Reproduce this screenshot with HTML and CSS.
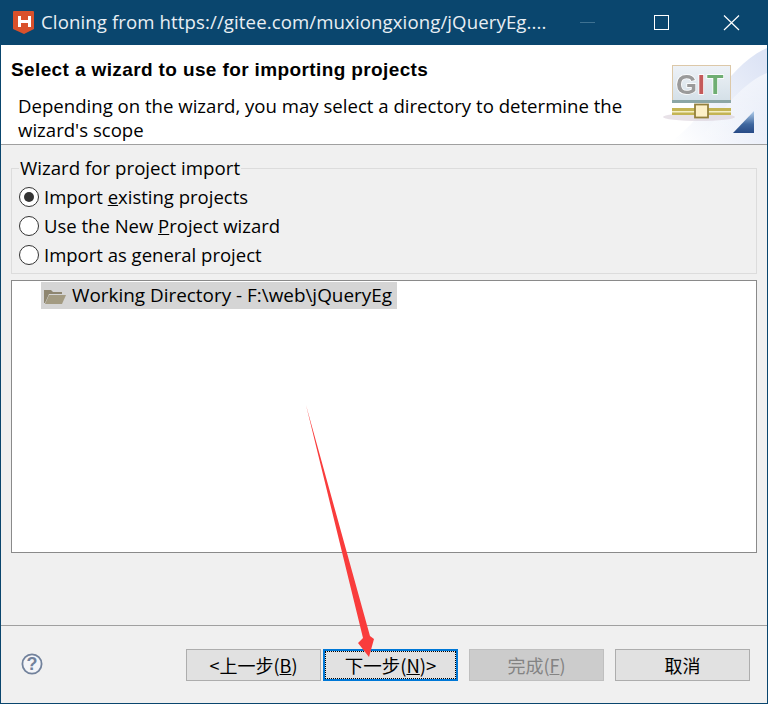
FILE: index.html
```html
<!DOCTYPE html>
<html lang="en">
<head>
<meta charset="utf-8">
<title>Cloning</title>
<link rel="stylesheet" href="styles.css">
</head>
<body>
<div class="window">
  <header class="titlebar">
    <svg class="app-icon" width="21" height="23" viewBox="0 0 21 23">
      <path d="M1 0H20Q21 0 21 1V18L11 23L0 18V1Q0 0 1 0Z" fill="#d9512c"/>
      <path d="M5 5H8V9H15V5H18V16H15V12H8V16H5Z" fill="#fff"/>
    </svg>
    <div class="title">Cloning from https://gitee.com/muxiongxiong/jQueryEg....</div>
    <div class="win-controls">
      <svg width="46" height="45" viewBox="0 0 46 45"><path d="M11 22.5H26" stroke="#3f7292" stroke-width="1"/></svg>
      <svg width="46" height="45" viewBox="0 0 46 45"><rect x="15.5" y="15.5" width="14" height="14" fill="none" stroke="#fff"/></svg>
      <svg width="46" height="45" viewBox="0 0 46 45"><path d="M15 15.5L30 30M30 15.5L15 30" stroke="#fff" stroke-width="1.2"/></svg>
    </div>
  </header>
  <section class="banner">
    <div class="banner-text">
      <h1>Select a wizard to use for importing projects</h1>
      <p>Depending on the wizard, you may select a directory to determine the wizard's scope</p>
    </div>
    <svg class="banner-art" width="110" height="99" viewBox="0 0 110 99">
      <defs>
        <linearGradient id="bg" x1="0" y1="1" x2="1" y2="0.2">
          <stop offset="0.05" stop-color="#fff"/><stop offset="1" stop-color="#dde4f5"/>
        </linearGradient>
        <linearGradient id="band" x1="0" y1="0" x2="0" y2="1">
          <stop offset="0" stop-color="#fff" stop-opacity="0.55"/><stop offset="1" stop-color="#fff" stop-opacity="0"/>
        </linearGradient>
        <linearGradient id="screen" x1="0" y1="0" x2="0" y2="1">
          <stop offset="0" stop-color="#eef2f7"/><stop offset="1" stop-color="#d3dfe7"/>
        </linearGradient>
        <linearGradient id="tri" x1="0" y1="0" x2="0" y2="1">
          <stop offset="0" stop-color="#b4d0ec"/><stop offset="0.6" stop-color="#3f679f"/><stop offset="1" stop-color="#274a86"/>
        </linearGradient>
      </defs>
      <path d="M10 99C45 80 70 20 110 3V99Z" fill="url(#bg)"/>
      <path d="M40 99C60 70 85 38 110 28V99Z" fill="url(#band)"/>
      <ellipse cx="42" cy="72" rx="36" ry="4" fill="#d8cfd8" opacity="0.6"/>
      <rect x="15.5" y="20.5" width="58" height="37" fill="url(#screen)" stroke="#dcc8a8"/>
      <rect x="15" y="55" width="59" height="3" fill="#8ca6a6"/>
      <g class="git-letters">
        <text x="19" y="49" class="git-g">G</text>
        <text x="40.5" y="49" class="git-i">I</text>
        <text x="50" y="49" class="git-t">T</text>
      </g>
      <rect x="15" y="63" width="59" height="7" fill="#c4b454"/>
      <rect x="15" y="66" width="59" height="1.5" fill="#f4eec4"/>
      <rect x="38" y="59.5" width="13" height="13" fill="#fdf0c8" stroke="#94803c" stroke-width="1.8"/>
      <path d="M76 88L97 66V88Z" fill="url(#tri)"/>
    </svg>
  </section>
  <main class="content">
    <fieldset class="group">
      <legend>Wizard for project import</legend>
      <label class="radio"><span class="dot on"></span><span>Import <u>e</u>xisting projects</span></label>
      <label class="radio"><span class="dot"></span><span>Use the New <u>P</u>roject wizard</span></label>
      <label class="radio"><span class="dot"></span><span>Import as <u>g</u>eneral project</span></label>
    </fieldset>
    <div class="tree">
      <div class="tree-row">
        <svg width="24" height="18" viewBox="0 0 24 18"><path d="M2 3H9L11 5H20V7H7L3 16H2Z" fill="#8e8670"/><path d="M7 8H24L20 17H3Z" fill="#a39b82"/></svg>
        <span>Working Directory - F:\web\jQueryEg</span>
      </div>
    </div>
  </main>
  <footer class="footer">
    <svg class="help" width="22" height="22" viewBox="0 0 22 22">
      <circle cx="11" cy="11" r="9.6" fill="#f4f5f8" stroke="#72829c" stroke-width="1.8"/>
      <text x="11" y="17" class="help-q">?</text>
    </svg>
    <div class="buttons">
      <button class="btn">&lt;上一步(<u>B</u>)</button>
      <button class="btn focus"><span>下一步(<u>N</u>)&gt;</span></button>
      <button class="btn disabled">完成(<u>F</u>)</button>
      <button class="btn cancel">取消</button>
    </div>
  </footer>
  <svg class="arrow" width="80" height="260" viewBox="0 0 80 260">
    <path d="M5 3L69 234L73 237L68 255L57 241L62 236Z" fill="#f93c3c"/>
  </svg>
</div>
</body>
</html>
```
FILE: styles.css
```css
* { box-sizing: border-box; }
html, body { margin: 0; padding: 0; }
body {
  width: 768px;
  height: 704px;
  overflow: hidden;
  font-family: "Noto Sans CJK SC", "Noto Sans", sans-serif;
  font-size: 18px;
  color: #000;
}
.window {
  position: relative;
  width: 768px;
  height: 704px;
  display: flex;
  flex-direction: column;
  background: #f0f0f0;
  border: 1px solid #0a466e;
  border-top: 0;
}
.titlebar {
  height: 45px;
  flex: none;
  display: flex;
  align-items: center;
  background: #0a466e;
  color: #e8eef3;
  padding-left: 13px;
  margin: 0 -1px;
}
.app-icon { flex: none; }
.title {
  margin-left: 7px;
  flex: 1;
  font-size: 18.6px;
  letter-spacing: 0.11px;
  line-height: 43px;
  padding-bottom: 2px;
  white-space: nowrap;
  font-family: "Open Sans", sans-serif;
}
.win-controls { display: flex; margin-right: 13px; gap: 24px; }
.win-controls svg { display: block; }
.banner {
  height: 100px;
  flex: none;
  display: flex;
  justify-content: space-between;
  background: #fff;
  border-bottom: 1px solid #a0a0a0;
}
.banner-text { padding: 12px 0 0 10px; width: 650px; }
.banner h1 {
  margin: 0;
  font-family: "Liberation Sans", sans-serif;
  font-size: 19px;
  letter-spacing: 0.38px;
  line-height: 26px;
  font-weight: 700;
}
.banner p {
  margin: 11px 0 0 7px;
  font-family: "Open Sans", sans-serif;
  font-size: 18.6px;
  line-height: 24px;
}
.banner-art { flex: none; display: block; }
.git-letters { filter: blur(0.5px); }
.git-g, .git-i, .git-t {
  font-family: "Liberation Sans", sans-serif;
  font-weight: 700;
  font-size: 27px;
  stroke: #fff;
  stroke-width: 1.5px;
  paint-order: stroke;
}
.git-g { fill: #9a9a9a; }
.git-i { fill: #c45a5a; }
.git-t { fill: #6fae72; }
.content {
  flex: 1;
  display: flex;
  flex-direction: column;
  padding: 11px 10px 72px;
  gap: 6px;
  font-family: "Open Sans", sans-serif;
  border-bottom: 1px solid #a0a0a0;
}
.group {
  margin: 0;
  height: 118px;
  flex: none;
  padding: 2px 0 0 7px;
  border: 1px solid #dcdcdc;
  min-width: 0;
}
.group legend {
  padding: 0 1px;
  margin-left: 0;
  font-size: 18.7px;
  line-height: 24px;
}
.radio {
  display: flex;
  align-items: center;
  gap: 5px;
  height: 29px;
  font-size: 18.5px;
}
.dot {
  width: 20px;
  height: 20px;
  border-radius: 50%;
  border: 1px solid #333;
  background: #fff;
  flex: none;
  display: flex;
  align-items: center;
  justify-content: center;
}
.dot.on::after {
  content: "";
  width: 10px;
  height: 10px;
  border-radius: 50%;
  background: #333;
}
.tree {
  flex: 1;
  background: #fff;
  border: 1px solid #8a8a8a;
  padding: 1px 0 0 29px;
}
.tree-row {
  display: inline-flex;
  align-items: center;
  gap: 6px;
  height: 27px;
  padding: 0 5px 0 1px;
  background: #d5d5d5;
  font-size: 18.9px;
  line-height: 27px;
  white-space: nowrap;
}
.footer {
  height: 77px;
  flex: none;
  display: flex;
  align-items: flex-start;
  justify-content: space-between;
  padding: 23px 17px 0 20px;
}
.help { margin-top: 4px; flex: none; }
.help-q {
  font-family: "Liberation Sans", sans-serif;
  font-weight: 700;
  font-size: 18px;
  text-anchor: middle;
  fill: #72829c;
}
.buttons { display: flex; }
.btn {
  width: 135px;
  height: 32px;
  margin: 0;
  padding: 0;
  background: #e1e1e1;
  border: 1px solid #adadad;
  font-family: "Noto Sans CJK SC", "Noto Sans", sans-serif;
  font-size: 18px;
  line-height: 28px;
  color: #000;
}
.btn.focus {
  margin-left: 2px;
  border: 2px solid #0078d7;
  outline: 1px dotted #000;
  outline-offset: -3px;
  font-size: 18.5px;
}
.btn.disabled {
  margin-left: 11px;
  background: #cccccc;
  border-color: #bfbfbf;
  color: #838383;
}
.btn.cancel { margin-left: 11px; }
.arrow {
  position: absolute;
  left: 300px;
  top: 402px;
  pointer-events: none;
}
```
